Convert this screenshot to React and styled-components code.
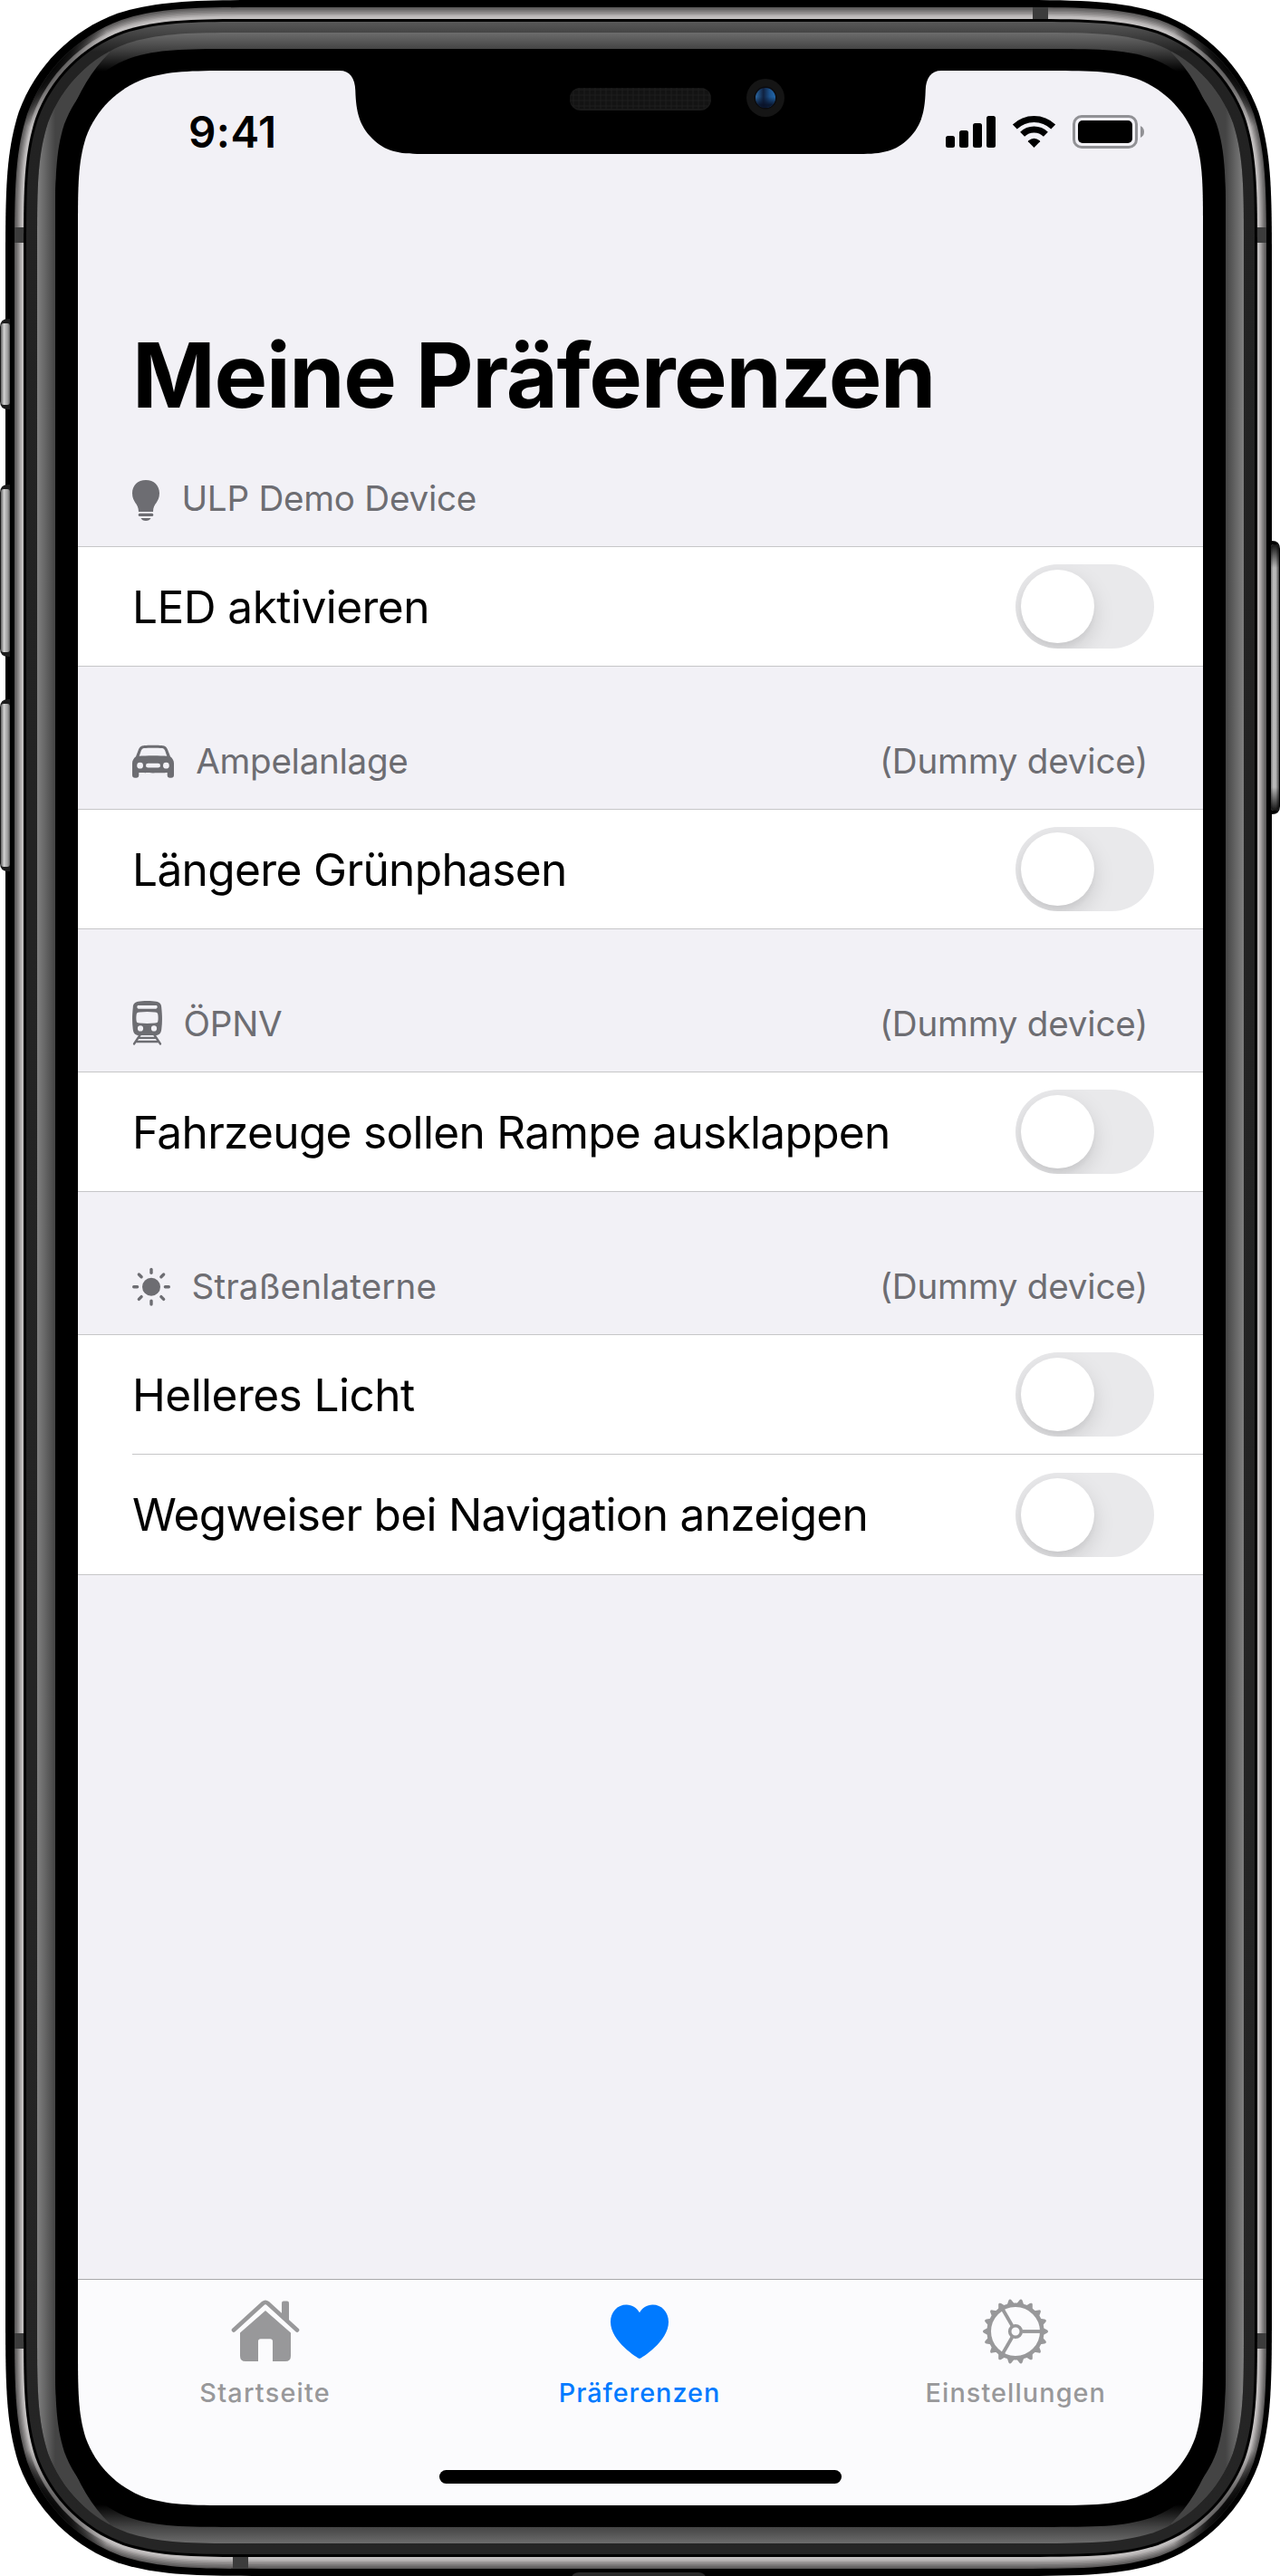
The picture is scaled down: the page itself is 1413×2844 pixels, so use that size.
import React from "react";
import styled, { createGlobalStyle } from "styled-components";

const FONT = '"Inter", "Roboto", "Liberation Sans", sans-serif';

const GlobalStyle = createGlobalStyle`
  html, body { margin: 0; padding: 0; background: #fff; }
  body { font-family: ${FONT}; font-kerning: normal; -webkit-font-smoothing: antialiased; }
`;

const Device = styled.main`
  position: relative;
  box-sizing: border-box;
  width: 1413px;
  height: 2844px;
  padding: 78px 85px 78px 86px;
  overflow: hidden;
  background: #fff;
`;

const Screen = styled.div`
  display: flex;
  flex-direction: column;
  width: 1242px;
  height: 2688px;
  background: #f2f1f6;
  color: #000;
`;

const Bezel = styled.svg`
  position: absolute;
  inset: 0;
  pointer-events: none;
`;

const StatusBar = styled.header`
  display: flex;
  justify-content: space-between;
  align-items: flex-start;
  height: 132px;
  padding: 0 65px 0 122px;
  box-sizing: border-box;
`;

const Clock = styled.time`
  margin-top: 39px;
  font-size: 47.6px;
  line-height: 58px;
  font-weight: 600;
  letter-spacing: ${(p) => p.$tracking}px;
`;

const StatusIcons = styled.svg`
  display: block;
  margin-top: 45px;
`;

const Title = styled.h1`
  margin: 0;
  padding: 144px 0 0 60px;
  height: 248px;
  box-sizing: border-box;
  font-size: 98.6px;
  line-height: 120px;
  font-weight: 700;
  white-space: nowrap;
  letter-spacing: ${(p) => p.$tracking}px;
`;

const SectionHeader = styled.div`
  display: flex;
  align-items: flex-end;
  box-sizing: border-box;
  height: ${(p) => (p.$first ? 145 : 157)}px;
  padding: 0 61px 25px 60px;
  color: #6d6d72;
  font-size: 38.6px;
  line-height: 56px;
`;

const HeaderIcon = styled.svg`
  flex: none;
  display: block;
  height: 56px;
  margin-right: ${(p) => p.$gap}px;
  fill: #6d6d72;
`;

const HeaderLabel = styled.span`
  letter-spacing: ${(p) => p.$tracking}px;
  white-space: nowrap;
`;

const HeaderNote = styled(HeaderLabel)`
  margin-left: auto;
`;

const Group = styled.ul`
  margin: 0;
  padding: 0;
  list-style: none;
  background: #fff;
  border-top: 1px solid #c6c6c8;
  border-bottom: 1px solid #c6c6c8;
`;

const Row = styled.li`
  display: flex;
  align-items: center;
  justify-content: space-between;
  box-sizing: border-box;
  height: 131px;
  margin-left: 60px;
  padding-right: 54px;
  & + & {
    height: 133px;
    border-top: 1px solid #c6c6c8;
  }
`;

const RowLabel = styled.span`
  font-size: 49.6px;
  line-height: 60px;
  letter-spacing: ${(p) => p.$tracking}px;
  white-space: nowrap;
`;

const Toggle = styled.button`
  display: flex;
  flex: none;
  align-items: center;
  width: 153px;
  height: 93px;
  padding: 6px;
  border: 0;
  border-radius: 47px;
  background: #e9e9eb;
  overflow: hidden;
`;

const Knob = styled.span`
  width: 81px;
  height: 81px;
  border-radius: 50%;
  background: #fff;
  box-shadow: 0 9px 24px rgba(0, 0, 0, 0.13), 0 5px 6px rgba(0, 0, 0, 0.04);
`;

const TabBar = styled.nav`
  position: relative;
  display: flex;
  margin-top: auto;
  height: 250px;
  box-sizing: border-box;
  border-top: 1px solid #a9a9ab;
  background: #fbfbfd;
`;

const Tab = styled.a`
  flex: 1 1 0;
  display: flex;
  flex-direction: column;
  align-items: center;
  box-sizing: border-box;
  padding: 17px ${(p) => (p.$active ? 2 : 0)}px 0 0;
  color: ${(p) => (p.$active ? "#007aff" : "#98989a")};
  fill: currentColor;
`;

const TabIcon = styled.svg`
  display: block;
  width: 80px;
  height: 80px;
`;

const TabLabel = styled.span`
  margin-top: 10px;
  font-size: 28.8px;
  line-height: 36px;
  font-weight: 500;
  letter-spacing: ${(p) => p.$tracking}px;
`;

const HomeIndicator = styled.div`
  position: absolute;
  left: 399px;
  bottom: 24px;
  width: 444px;
  height: 15px;
  border-radius: 8px;
  background: #000;
`;

/* Rounded rectangle with continuous-curvature corners. */
function squircle(l, t, r, b, rad) {
  const k = [1.52866498, 1.08849296, 0.86840694, 0.63149379, 0.37282383, 0.16905956, 0.07491139].map((v) => v * rad);
  const [a, c, d, e, f, g, h] = k;
  return [
    `M${l + a} ${t}H${r - a}`,
    `C${r - c} ${t} ${r - d} ${t} ${r - e} ${t + h}`,
    `C${r - f} ${t + g} ${r - g} ${t + f} ${r - h} ${t + e}`,
    `C${r} ${t + d} ${r} ${t + c} ${r} ${t + a}`,
    `V${b - a}`,
    `C${r} ${b - c} ${r} ${b - d} ${r - h} ${b - e}`,
    `C${r - g} ${b - f} ${r - f} ${b - g} ${r - e} ${b - h}`,
    `C${r - d} ${b} ${r - c} ${b} ${r - a} ${b}`,
    `H${l + a}`,
    `C${l + c} ${b} ${l + d} ${b} ${l + e} ${b - h}`,
    `C${l + f} ${b - g} ${l + g} ${b - f} ${l + h} ${b - e}`,
    `C${l} ${b - d} ${l} ${b - c} ${l} ${b - a}`,
    `V${t + a}`,
    `C${l} ${t + c} ${l} ${t + d} ${l + h} ${t + e}`,
    `C${l + g} ${t + f} ${l + f} ${t + g} ${l + e} ${t + h}`,
    `C${l + d} ${t} ${l + c} ${t} ${l + a} ${t}Z`,
  ].join("");
}

const SCREEN = squircle(86, 78, 1328, 2766, 117);
const STEEL = ["#5c5a5a", "#6b6969", "#7a7878", "#8b8888", "#9b9898", "#aeabab", "#bfbcbc", "#c3c0c0"];
const NOTCH =
  "M370 76V78H375C386 78 392 86 392.3 100C393 124 397 139 411 153C425 167 440 170 465 170H949C974 170 989 167 1003 153C1017 139 1021 124 1021.7 100C1022 86 1028 78 1039 78V76Z";

function steelLayer(i) {
  return (
    <path
      key={i}
      fill={STEEL[i]}
      d={squircle(16 + i * 1.25, 8 + i * 1.6, 1398 - i * 1.25, 2836 - i * 1.6, 187 - i * 1.7)}
    />
  );
}

function CornerShade({ opacity }) {
  return (
    <g clipPath="url(#steelClip)" opacity={opacity}>
      {[
        [56, 72],
        [1358, 72],
        [56, 2772],
        [1358, 2772],
      ].map(([x, y]) => (
        <circle key={`${x}-${y}`} cx={x} cy={y} r="72" fill="url(#shade)" />
      ))}
    </g>
  );
}

function VolumeButton({ y, height }) {
  return (
    <g>
      <path d={`M11 ${y}H9Q0 ${y} 0 ${y + 9}V${y + height - 9}Q0 ${y + height} 9 ${y + height}H11Z`} fill="#1c1c1c" />
      <rect x="1" y={y + 5} width="10" height={height - 10} rx="3" fill="url(#button)" />
    </g>
  );
}

function PowerButton({ y, height }) {
  return (
    <g>
      <path d={`M1402 ${y}H1404Q1413 ${y} 1413 ${y + 9}V${y + height - 9}Q1413 ${y + height} 1404 ${y + height}H1402Z`} />
      <rect x="1403" y={y + 4} width="9" height={height - 8} rx="3" fill="url(#power)" />
      <rect x="1403" y={y + 4} width="9" height="26" rx="3" fill="url(#fadeDown)" />
      <rect x="1403" y={y + height - 30} width="9" height="26" rx="3" fill="url(#fadeUp)" />
    </g>
  );
}

function DeviceBezel() {
  return (
    <Bezel width="1413" height="2844" viewBox="0 0 1413 2844" aria-hidden="true">
      <defs>
        <linearGradient id="button">
          <stop offset="0" stopColor="#666" />
          <stop offset=".35" stopColor="#d0d0d0" />
          <stop offset=".8" stopColor="#959595" />
          <stop offset="1" stopColor="#555" />
        </linearGradient>
        <linearGradient id="power">
          <stop offset="0" stopColor="#777" />
          <stop offset=".3" stopColor="#bbb" />
          <stop offset=".6" stopColor="#b5b5b5" />
          <stop offset="1" stopColor="#444" />
        </linearGradient>
        <linearGradient id="fadeDown" x2="0" y2="1">
          <stop offset="0" stopColor="#000" stopOpacity=".9" />
          <stop offset="1" stopColor="#000" stopOpacity="0" />
        </linearGradient>
        <linearGradient id="fadeUp" x2="0" y2="1">
          <stop offset="0" stopColor="#000" stopOpacity="0" />
          <stop offset="1" stopColor="#000" stopOpacity=".9" />
        </linearGradient>
        <linearGradient id="rim" gradientUnits="userSpaceOnUse" x1="0" y1="24" x2="0" y2="2820">
          <stop offset="0" stopColor="#595959" />
          <stop offset=".0043" stopColor="#454545" />
          <stop offset=".012" stopColor="#222" />
          <stop offset="1" stopColor="#252525" />
        </linearGradient>
        <linearGradient id="glow" gradientUnits="userSpaceOnUse" x1="0" y1="36" x2="0" y2="2808">
          <stop offset="0" stopColor="#6c6c6c" />
          <stop offset=".0065" stopColor="#444" />
          <stop offset=".0155" stopColor="#000" />
          <stop offset=".9845" stopColor="#000" />
          <stop offset=".9935" stopColor="#444" />
          <stop offset="1" stopColor="#6c6c6c" />
        </linearGradient>
        <linearGradient id="side" gradientUnits="userSpaceOnUse" x1="41" y1="0" x2="61" y2="0">
          <stop offset="0" stopColor="#808080" />
          <stop offset="1" stopColor="#444" />
        </linearGradient>
        <radialGradient id="shade">
          <stop offset="0" stopColor="#000" stopOpacity=".9" />
          <stop offset=".35" stopColor="#000" stopOpacity=".75" />
          <stop offset="1" stopColor="#000" stopOpacity="0" />
        </radialGradient>
        <linearGradient id="lens">
          <stop offset="0" stopColor="#2c6aa5" />
          <stop offset=".4" stopColor="#10213f" />
          <stop offset=".7" stopColor="#1b4f88" />
          <stop offset="1" stopColor="#2268ab" />
        </linearGradient>
        <linearGradient id="lensShade" x2="0" y2="1">
          <stop offset=".45" stopColor="#091228" stopOpacity="0" />
          <stop offset=".85" stopColor="#091228" stopOpacity=".9" />
        </linearGradient>
        <pattern id="mesh" width="6" height="6" patternUnits="userSpaceOnUse">
          <rect width="6" height="6" fill="#131313" />
          <path d="M0 3H6M3 0V6" stroke="#1d1d1d" />
        </pattern>
        <clipPath id="frameClip">
          <path d={squircle(41, 36, 1373, 2808, 158)} />
        </clipPath>
        <clipPath id="steelClip">
          <path d={squircle(16, 8, 1398, 2836, 187)} />
        </clipPath>
        <mask id="cutout" maskUnits="userSpaceOnUse" x="0" y="0" width="1413" height="2844">
          <rect width="1413" height="2844" fill="#fff" />
          <path d={SCREEN} fill="#000" />
          <path d={NOTCH} fill="#fff" />
        </mask>
        <g id="crescent">
          <path d="M41 1425V36H121V58C82 96 61 160 61 222V1425Z" fill="url(#side)" />
        </g>
      </defs>
      <g mask="url(#cutout)">
        <rect width="1413" height="2844" fill="#fff" />
        <path d={squircle(6, 0, 1404, 2844, 196)} fill="#000" />
        <VolumeButton y={352} height={100} />
        <VolumeButton y={535} height={190} />
        <VolumeButton y={772} height={190} />
        <PowerButton y={597} height={302} />
        {[0, 1, 2, 3, 4].map(steelLayer)}
        <CornerShade opacity={1} />
        {[5, 6, 7].map(steelLayer)}
        <CornerShade opacity={0.55} />
        <g fill="#3c3c3c">
          <rect x="16" y="251" width="10" height="17" />
          <rect x="1388" y="251" width="10" height="17" />
          <rect x="16" y="2576" width="10" height="17" />
          <rect x="1388" y="2576" width="10" height="17" />
          <rect x="1140" y="8" width="17" height="13" />
          <rect x="257" y="2823" width="17" height="13" />
        </g>
        <path d={squircle(26, 21, 1388, 2823, 174)} fill="#000" />
        <path d={squircle(29, 24, 1385, 2820, 171)} fill="url(#rim)" />
        <path d={squircle(41, 36, 1373, 2808, 158)} fill="url(#glow)" />
        <g clipPath="url(#frameClip)">
          <use href="#crescent" />
          <use href="#crescent" transform="translate(1414 0) scale(-1 1)" />
          <use href="#crescent" transform="translate(0 2844) scale(1 -1)" />
          <use href="#crescent" transform="translate(1414 2844) scale(-1 -1)" />
        </g>
        <path d={squircle(61, 54, 1353, 2790, 132)} fill="#000" />
        <rect x="631" y="2840" width="148" height="12" rx="8" fill="#2a2a2a" />
        <rect x="629" y="97" width="156" height="25" rx="12" fill="#1a1a1a" />
        <rect x="629" y="97" width="156" height="23" rx="11.5" fill="url(#mesh)" />
        <circle cx="845" cy="108" r="21" fill="#151515" />
        <circle cx="845" cy="108" r="12.5" fill="#0b0b0f" />
        <circle cx="845" cy="108" r="11" fill="url(#lens)" />
        <circle cx="845" cy="108" r="11" fill="url(#lensShade)" />
      </g>
    </Bezel>
  );
}

function StatusGlyphs() {
  return (
    <StatusIcons width="219" height="42" viewBox="0 0 219 42" aria-hidden="true">
      <rect x="0" y="27" width="10" height="13" rx="2.5" />
      <rect x="15" y="21" width="10" height="19" rx="2.5" />
      <rect x="30" y="13" width="10" height="27" rx="2.5" />
      <rect x="45" y="5" width="10" height="35" rx="2.5" />
      <g fill="none" stroke="#000">
        <path d="M76.3 17A30.5 30.5 0 0 1 118.7 17" strokeWidth="7" />
        <path d="M84.6 25.2A18.4 18.4 0 0 1 110.4 25.2" strokeWidth="7" />
      </g>
      <path d="M97.5 40L90.9 33.3Q90.7 32.7 91.3 32.2Q97.5 27.2 103.7 32.2Q104.3 32.7 104.1 33.3Z" />
      <rect x="141.5" y="5.5" width="69" height="34" rx="8.5" fill="none" stroke="#919195" strokeWidth="3" />
      <rect x="146" y="10" width="60" height="25" rx="5" />
      <path d="M215 16Q219 18 219 22.5T215 29Z" fill="#919195" />
    </StatusIcons>
  );
}

function BulbIcon() {
  return (
    <HeaderIcon width="30" viewBox="0 -3 30 56" $gap={24.4}>
      <path d="M15 5C6 5 0 11 0 19.5C0 30 7 30.5 7 40H23C23 30.5 30 30 30 19.5C30 11 24 5 15 5Z" />
      <rect x="6.7" y="41.8" width="16.6" height="3.2" rx="1.6" />
      <path d="M9.5 47H20.5C19.5 49 17.8 50 15 50S10.5 49 9.5 47Z" />
    </HeaderIcon>
  );
}

function CarIcon() {
  return (
    <HeaderIcon width="46" viewBox="0 -1.8 46 56" $gap={24.3}>
      <path
        fillRule="evenodd"
        d="M12 9.5C13 9.2 17 9 23 9S33 9.2 34 9.5C37.5 10 38.6 12.5 39.3 14.5L42 21.5C44.5 23.5 46 26 46 29V42C46 44 45 45 43 45H41.5C39.7 45 38.7 44 38.7 42V39.3C33 39.8 13 39.8 7.3 39.3V42C7.3 44 6.3 45 4.5 45H3C1 45 0 44 0 42V29C0 26 1.5 23.5 4 21.5L6.7 14.5C7.4 12.5 8.5 10 12 9.5ZM13 12.3C11.3 12.6 10.4 13.5 9.8 15L7.7 21C15 20.3 31 20.3 38.3 21L36.2 15C35.6 13.5 34.7 12.6 33 12.3C28 11.8 18 11.8 13 12.3ZM8.6 28A3.4 3.4 0 1 0 8.6 34.8A3.4 3.4 0 1 0 8.6 28ZM37.4 28A3.4 3.4 0 1 0 37.4 34.8A3.4 3.4 0 1 0 37.4 28ZM17.4 29A2.4 2.4 0 0 0 17.4 33.8H28.6A2.4 2.4 0 0 0 28.6 29Z"
      />
    </HeaderIcon>
  );
}

function TramIcon() {
  return (
    <HeaderIcon width="33" viewBox="0 -2 33 56" $gap={23.6}>
      <path
        fillRule="evenodd"
        d="M6.5 1.8C11 .8 22 .8 26.5 1.8C30 2.5 32 4.2 32.2 8C33.2 18 33.2 24 32.3 32C31.9 36.5 30 39 25.5 39H7.5C3 39 1.1 36.5 .7 32C-.2 24-.2 18 .8 8C1 4.2 3 2.5 6.5 1.8ZM7 6C5.9 6 5.3 6.6 5.3 7.6S5.9 9.8 7 9.8H26C27.1 9.8 27.7 8.6 27.7 7.6S27.1 6 26 6ZM8 13.5C5.5 13.7 4.8 14.3 4.6 16.5C4.3 19 4.3 21 4.6 23C4.8 25 5.7 25.3 8 25.5C14 26.1 19 26.1 25 25.5C27.3 25.3 28.2 25 28.4 23C28.7 21 28.7 19 28.4 16.5C28.2 14.3 27.5 13.7 25 13.5C19 12.7 14 12.7 8 13.5ZM9 28.3A3.1 3.1 0 1 0 9 34.5A3.1 3.1 0 1 0 9 28.3ZM24 28.3A3.1 3.1 0 1 0 24 34.5A3.1 3.1 0 1 0 24 28.3Z"
      />
      <path d="M9 38L2 48.5M24 38L31 48.5M7 41.8H26M4.5 46H28.5" fill="none" stroke="#6d6d72" strokeWidth="2.3" strokeLinecap="round" />
    </HeaderIcon>
  );
}

function SunIcon() {
  return (
    <HeaderIcon width="42" viewBox="0 -1.7 42 56" $gap={23.6}>
      <circle cx="21" cy="27" r="10" />
      <g stroke="#6d6d72" strokeWidth="3.4" strokeLinecap="round">
        {[0, 45, 90, 135, 180, 225, 270, 315].map((a) => (
          <path key={a} d="M21 7.7V11.6" transform={`rotate(${a} 21 27)`} />
        ))}
      </g>
    </HeaderIcon>
  );
}

function HomeIcon() {
  return (
    <TabIcon viewBox="0 0 80 80">
      <path d="M5 38.5L37.5 8.8Q40 6.8 42.5 8.8L75 38.5" fill="none" stroke="currentColor" strokeWidth="4.6" strokeLinecap="round" />
      <path d="M58 24V8.5Q58 6.5 60 6.5H64Q66 6.5 66 8.5V31.5Z" />
      <path d="M40 17L68 41.5V67Q68 73 62 73H48V51Q48 48.3 45.3 48.3H34.7Q32 48.3 32 51V73H18Q12 73 12 67V41.5Z" />
    </TabIcon>
  );
}

function HeartIcon() {
  return (
    <TabIcon viewBox="0 0 80 80">
      <path d="M40 70C38.5 70 8 51 8 29.5C8 18.5 15.5 10.5 25.5 10.5C32 10.5 37.3 14 40 19.3C42.7 14 48 10.5 54.5 10.5C64.5 10.5 72 18.5 72 29.5C72 51 41.5 70 40 70Z" />
    </TabIcon>
  );
}

function GearIcon() {
  return (
    <TabIcon viewBox="0 0 80 80">
      <g fill="none" stroke="currentColor">
        <circle cx="40" cy="40" r="29.3" strokeWidth="4.6" />
        <circle cx="40" cy="40" r="6.3" strokeWidth="3.6" />
        {[0, 120, 240].map((a) => (
          <path key={a} d="M47.5 40H68" strokeWidth="3.8" transform={`rotate(${a} 40 40)`} />
        ))}
      </g>
      {Array.from({ length: 18 }, (_, i) => (
        <path key={i} d="M70.5 36L74.7 38.3Q76 39 76 40T74.7 41.7L70.5 44Z" transform={`rotate(${i * 20} 40 40)`} />
      ))}
    </TabIcon>
  );
}

const SECTIONS = [
  { icon: <BulbIcon />, label: "ULP Demo Device", tracking: -0.24, rows: [["LED aktivieren", -0.56]] },
  { icon: <CarIcon />, label: "Ampelanlage", tracking: -0.3, note: true, rows: [["Längere Grünphasen", -0.65]] },
  { icon: <TramIcon />, label: "ÖPNV", tracking: -0.3, note: true, rows: [["Fahrzeuge sollen Rampe ausklappen", -0.7]] },
  {
    icon: <SunIcon />,
    label: "Straßenlaterne",
    tracking: 0.12,
    note: true,
    rows: [["Helleres Licht", -0.56], ["Wegweiser bei Navigation anzeigen", -0.74]],
  },
];

export default function App() {
  return (
    <>
      <GlobalStyle />
      <Device>
        <Screen>
          <StatusBar>
            <Clock $tracking={0.4}>9:41</Clock>
            <StatusGlyphs />
          </StatusBar>
          <Title $tracking={-1.35}>Meine Präferenzen</Title>
          {SECTIONS.map((s, i) => (
            <section key={s.label}>
              <SectionHeader $first={i === 0}>
                {s.icon}
                <HeaderLabel $tracking={s.tracking}>{s.label}</HeaderLabel>
                {s.note && <HeaderNote $tracking={-0.2}>(Dummy device)</HeaderNote>}
              </SectionHeader>
              <Group>
                {s.rows.map(([label, tracking]) => (
                  <Row key={label}>
                    <RowLabel $tracking={tracking}>{label}</RowLabel>
                    <Toggle role="switch" aria-checked="false" aria-label={label}>
                      <Knob />
                    </Toggle>
                  </Row>
                ))}
              </Group>
            </section>
          ))}
          <TabBar>
            <Tab>
              <HomeIcon />
              <TabLabel $tracking={1.25}>Startseite</TabLabel>
            </Tab>
            <Tab $active>
              <HeartIcon />
              <TabLabel $tracking={1}>Präferenzen</TabLabel>
            </Tab>
            <Tab>
              <GearIcon />
              <TabLabel $tracking={1.1}>Einstellungen</TabLabel>
            </Tab>
            <HomeIndicator />
          </TabBar>
        </Screen>
        <DeviceBezel />
      </Device>
    </>
  );
}
